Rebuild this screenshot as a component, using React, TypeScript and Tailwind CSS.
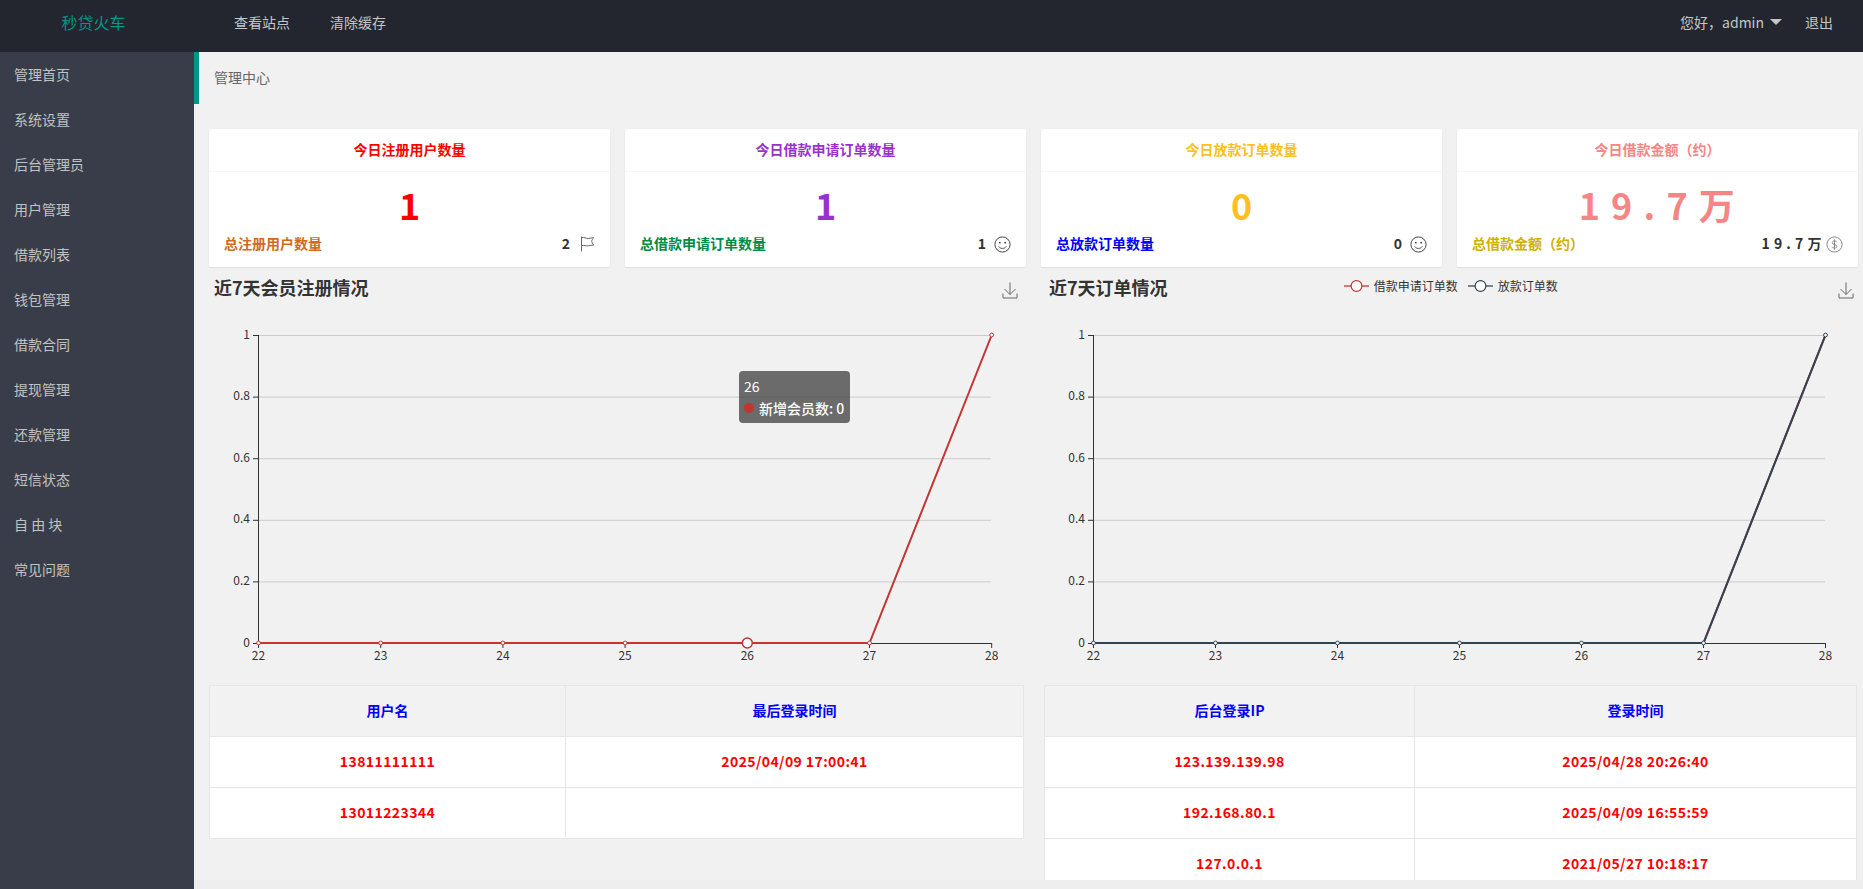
import React from "react";

const FONT = "font-['Noto_Sans_CJK_SC','Noto_Sans',sans-serif]";

const MENU = ["管理首页", "系统设置", "后台管理员", "用户管理", "借款列表", "钱包管理", "借款合同", "提现管理", "还款管理", "短信状态", "自 由 块", "常见问题"];

function FlagIcon() {
  return (
    <svg width="15" height="16" viewBox="0 0 15 16" fill="none" stroke="#666" strokeWidth="1" className="mt-[2px]">
      <path d="M1.500 .5v15M1.500 1.800c2.500-1.400 4.500 1.200 7 .7 1.800-.3 3.300-.7 5-.9-.5 1.200-1.800 2.500-1.800 3.700s1.300 2.500 1.800 3.700c-1.700.1-3.200.5-5 .8-2.500.4-4.500-1-7-.1" />
    </svg>
  );
}

function SmileIcon() {
  return (
    <svg width="17" height="17" viewBox="0 0 17 17" fill="none" stroke="#444" strokeWidth="1" className="mt-[2px]">
      <circle cx="8.5" cy="8.500" r="7.600" />
      <circle cx="5.800" cy="6.700" r=".9" fill="#444" stroke="none" />
      <circle cx="11.200" cy="6.700" r=".9" fill="#444" stroke="none" />
      <path d="M4.800 10.500c1.800 2.600 5.600 2.600 7.400 0" />
    </svg>
  );
}

function DollarIcon() {
  return (
    <svg width="17" height="17" viewBox="0 0 17 17" fill="none" stroke="#888" strokeWidth="1" className="mt-[2px]">
      <circle cx="8.5" cy="8.500" r="7.600" />
      <path d="M10.700 6.200c-.5-1-1.300-1.400-2.200-1.400-1.300 0-2.200.7-2.200 1.800 0 2.500 4.500 1.300 4.500 3.800 0 1.100-1 1.800-2.300 1.800-1.100 0-2-.5-2.400-1.500M8.500 3.500v10" />
    </svg>
  );
}

function DownloadIcon() {
  return (
    <svg width="16" height="17" viewBox="0 0 16 17" fill="none" stroke="#666" strokeWidth="1">
      <path d="M8 .5v12M2.500 7l5.500 5.500L13.500 7M1 11.500v4.500h14v-4.500" />
    </svg>
  );
}

type CardProps = {
  title: string;
  big: string;
  color: string;
  sub: string;
  subColor: string;
  total: string;
  icon: React.ReactNode;
  gap: string;
  wide?: boolean;
};

function Card({ title, big, color, sub, subColor, total, icon, gap, wide }: CardProps) {
  return (
    <div className="h-[138px] bg-white rounded-[2px] shadow-[0_1px_2px_rgba(0,0,0,0.08)]">
      <div className={`h-[43px] pb-[2px] border-b border-[#f6f6f6] flex items-center justify-center text-[14px] font-bold ${color}`}>{title}</div>
      <div className={`h-[60px] pt-[3px] flex items-center justify-center text-[36px] font-bold leading-none ${color} ${wide ? "tracking-[1.5px]" : ""}`}>{big}</div>
      <div className="flex items-center justify-between px-[15px] h-[28px] -mt-[3px] text-[14px] font-bold">
        <span className={subColor}>{sub}</span>
        <span className={`flex items-center ${gap} text-[#333]`}>
          <span className={wide ? "tracking-[0.5px]" : ""}>{total}</span>
          {icon}
        </span>
      </div>
    </div>
  );
}

function LegendKey({ color }: { color: string }) {
  return (
    <svg width="25" height="14" viewBox="0 0 25 14" fill="none">
      <path d="M0 7h25" stroke={color} strokeWidth="1.500" strokeOpacity=".85" />
      <circle cx="12.500" cy="7" r="5.400" fill="#fff" stroke={color} strokeWidth="1.200" />
    </svg>
  );
}

function Chart({ x0, step, color, under, w, active }: { x0: number; step: number; color: string; under?: string; w: number; active?: boolean }) {
  const top = 32;
  const bottom = 340;
  const labelsY = ["0", "0.2", "0.4", "0.6", "0.8", "1"];
  const labelsX = ["22", "23", "24", "25", "26", "27", "28"];
  const xs = labelsX.map((_, i) => x0 + i * step);
  const ys = labelsY.map((_, i) => bottom - ((bottom - top) * i) / 5);
  const points = xs.map((x, i) => `${x + 0.5},${i === 6 ? top : bottom}`).join(" ");
  return (
    <svg width={w} height="382" viewBox={`0 0 ${w} 382`} className="block" fontSize="12" fill="#333">
      {ys.slice(1).map((y) => (
        <line key={y} x1={x0} x2={xs[6]} y1={y + 0.5} y2={y + 0.5} stroke="#ccc" />
      ))}
      <line x1={x0 + 0.5} x2={x0 + 0.5} y1={top} y2={bottom + 1} stroke="#333" />
      <line x1={x0} x2={xs[6] + 0.5} y1={bottom + 0.5} y2={bottom + 0.5} stroke="#333" />
      {ys.map((y, i) => (
        <g key={i}>
          <line x1={x0 - 5} x2={x0} y1={y + 0.5} y2={y + 0.5} stroke="#333" />
          <text x={x0 - 8} y={y + 3.500} textAnchor="end">{labelsY[i]}</text>
        </g>
      ))}
      {xs.map((x, i) => (
        <g key={i}>
          <line x1={x + 0.5} x2={x + 0.5} y1={bottom} y2={bottom + 5} stroke="#333" />
          <text x={x + 0.5} y={bottom + 17} textAnchor="middle">{labelsX[i]}</text>
        </g>
      ))}
      {under && <polyline points={points} fill="none" stroke={under} strokeWidth="2" />}
      <polyline points={points} fill="none" stroke={color} strokeWidth="2" />
      {xs.map((x, i) =>
        active && i === 4 ? (
          <circle key={i} cx={x + 0.5} cy={bottom} r="5" fill="#fff" stroke={color} strokeWidth="1.500" />
        ) : (
          <circle key={i} cx={x + 0.5} cy={i === 6 ? top : bottom} r="1.900" fill="#fff" stroke={color} strokeWidth="1" />
        )
      )}
    </svg>
  );
}

function Table({ cols, head, rows }: { cols: string; head: string[]; rows: string[][] }) {
  return (
    <div className="border border-[#e6e6e6] border-b-0 text-[14px] font-bold">
      <div className={`grid ${cols} h-[51px] pb-[2px] bg-[#f2f2f2] text-[#0000ff] border-b border-[#e6e6e6]`}>
        {head.map((h, i) => (
          <div key={h} className={`flex items-center justify-center ${i === 0 ? "border-r border-[#e6e6e6] -mb-[2px] pb-[2px]" : ""}`}>{h}</div>
        ))}
      </div>
      {rows.map((r, ri) => (
        <div key={ri} className={`grid ${cols} h-[51px] bg-white text-[#ff0000] tracking-[0.4px] border-b border-[#e6e6e6]`}>
          {r.map((c, i) => (
            <div key={i} className={`flex items-center justify-center pb-[2px] ${i === 0 ? "border-r border-[#e6e6e6]" : ""}`}>{c}</div>
          ))}
        </div>
      ))}
    </div>
  );
}

export default function App() {
  return (
    <div className={`w-[1863px] h-[889px] overflow-hidden flex flex-col bg-[#f1f1f1] ${FONT}`}>
      <header className="h-[52px] shrink-0 bg-[#23262e] flex items-start text-[14px] text-[#c6c6c6]">
        <div className="w-[194px] h-[44px] pr-[7px] flex items-center justify-center text-[16px] text-[#009688]">秒贷火车</div>
        <nav className="flex items-center h-[44px] gap-[40px] ml-[40px]">
          <span>查看站点</span>
          <span>清除缓存</span>
        </nav>
        <div className="ml-auto h-[44px] flex items-center pr-[30px]">
          <span>您好，admin</span>
          <span className="ml-[6px] w-0 h-0 border-x-[6px] border-x-transparent border-t-[6px] border-t-[#c6c6c6]" />
          <span className="ml-[23px]">退出</span>
        </div>
      </header>
      <div className="flex-1 flex min-h-0">
        <aside className="w-[194px] shrink-0 bg-[#393d49] text-[14px] text-[#c2c2c2]">
          {MENU.map((m) => (
            <div key={m} className="h-[45px] flex items-center pl-[14px]">{m}</div>
          ))}
        </aside>
        <div className="flex-1 flex flex-col min-w-0 bg-[#eeeeee]">
          <main className="h-[828px] overflow-hidden bg-[#f1f1f1]">
            <div className="h-[52px] pb-[2px] border-l-[5px] border-[#009688] pl-[15px] flex items-center text-[14px] text-[#666]">管理中心</div>
            <div className="grid grid-cols-4 gap-[15px] mt-[25px] pl-[15px] pr-[5px]">
              <Card title="今日注册用户数量" big="1" color="text-[#ff0000]" sub="总注册用户数量" subColor="text-[#d2691e]" total="2" icon={<FlagIcon />} gap="gap-[10px]" />
              <Card title="今日借款申请订单数量" big="1" color="text-[#9932cc]" sub="总借款申请订单数量" subColor="text-[#008b45]" total="1" icon={<SmileIcon />} gap="gap-[8px]" />
              <Card title="今日放款订单数量" big="0" color="text-[#ffbf20]" sub="总放款订单数量" subColor="text-[#0000ff]" total="0" icon={<SmileIcon />} gap="gap-[8px]" />
              <Card title="今日借款金额（约）" big="1 9 . 7 万" color="text-[#f58686]" sub="总借款金额（约）" subColor="text-[#d2b000]" total="1 9 . 7 万" icon={<DollarIcon />} gap="gap-[4px]" wide />
            </div>
            <div className="flex gap-[20px] pl-[15px]">
              <section className="w-[815px]">
                <div className="relative">
                  <div className="h-[36px] flex items-start pt-[8px] pl-[5px] text-[#333]">
                    <span className="text-[18px] font-bold leading-[24px]">近7天会员注册情况</span>
                    <span className="ml-auto mt-[7px] mr-[6px]"><DownloadIcon /></span>
                  </div>
                  <Chart x0={49} step={122.2} color="#c23531" w={815} active />
                  <div className="absolute left-[530px] top-[104px] w-[111px] h-[52px] rounded-[4px] bg-[rgba(50,50,50,0.7)] text-white text-[14px] px-[5px] py-[4px] leading-[22px]">
                    <div>26</div>
                    <div className="flex items-center whitespace-nowrap font-medium">
                      <span className="w-[10px] h-[10px] rounded-full bg-[#c23531] mr-[5px]" />
                      新增会员数: 0
                    </div>
                  </div>
                </div>
                <Table cols="grid-cols-[356px_1fr]" head={["用户名", "最后登录时间"]} rows={[["13811111111", "2025/04/09 17:00:41"], ["13011223344", ""]]} />
              </section>
              <section className="w-[813px]">
                <div className="h-[36px] flex items-start pt-[8px] pl-[5px] text-[#333]">
                  <span className="text-[18px] font-bold leading-[24px]">近7天订单情况</span>
                  <div className="flex items-center ml-[176px] mt-[4px] text-[12px] leading-[14px]">
                    <LegendKey color="#c23531" />
                    <span className="ml-[5px]">借款申请订单数</span>
                    <span className="w-[10px]" />
                    <LegendKey color="#2f4554" />
                    <span className="ml-[5px]">放款订单数</span>
                  </div>
                  <span className="ml-auto mt-[7px] mr-[3px]"><DownloadIcon /></span>
                </div>
                <Chart x0={49} step={122} color="#2f4554" under="#c23531" w={813} />
                <Table cols="grid-cols-[370px_1fr]" head={["后台登录IP", "登录时间"]} rows={[["123.139.139.98", "2025/04/28 20:26:40"], ["192.168.80.1", "2025/04/09 16:55:59"], ["127.0.0.1", "2021/05/27 10:18:17"]]} />
              </section>
            </div>
          </main>
        </div>
      </div>
    </div>
  );
}
